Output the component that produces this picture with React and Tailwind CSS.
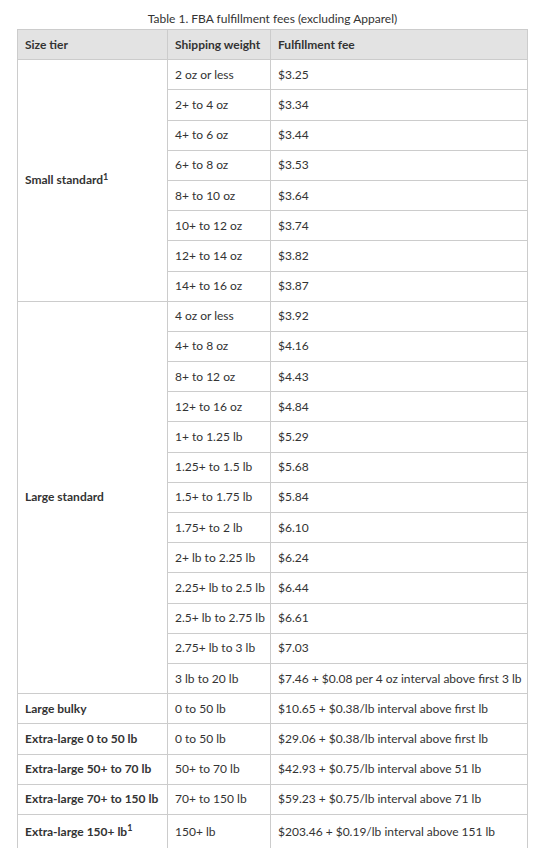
import React from 'react';

const smallStandard = [
  ['2 oz or less', '$3.25'],
  ['2+ to 4 oz', '$3.34'],
  ['4+ to 6 oz', '$3.44'],
  ['6+ to 8 oz', '$3.53'],
  ['8+ to 10 oz', '$3.64'],
  ['10+ to 12 oz', '$3.74'],
  ['12+ to 14 oz', '$3.82'],
  ['14+ to 16 oz', '$3.87'],
];

const largeStandard = [
  ['4 oz or less', '$3.92'],
  ['4+ to 8 oz', '$4.16'],
  ['8+ to 12 oz', '$4.43'],
  ['12+ to 16 oz', '$4.84'],
  ['1+ to 1.25 lb', '$5.29'],
  ['1.25+ to 1.5 lb', '$5.68'],
  ['1.5+ to 1.75 lb', '$5.84'],
  ['1.75+ to 2 lb', '$6.10'],
  ['2+ lb to 2.25 lb', '$6.24'],
  ['2.25+ lb to 2.5 lb', '$6.44'],
  ['2.5+ lb to 2.75 lb', '$6.61'],
  ['2.75+ lb to 3 lb', '$7.03'],
  ['3 lb to 20 lb', '$7.46 + $0.08 per 4 oz interval above first 3 lb'],
];

const singles = [
  ['Large bulky', '0 to 50 lb', '$10.65 + $0.38/lb interval above first lb'],
  ['Extra-large 0 to 50 lb', '0 to 50 lb', '$29.06 + $0.38/lb interval above first lb'],
  ['Extra-large 50+ to 70 lb', '50+ to 70 lb', '$42.93 + $0.75/lb interval above 51 lb'],
  ['Extra-large 70+ to 150 lb', '70+ to 150 lb', '$59.23 + $0.75/lb interval above 71 lb'],
];

const cell = 'border border-[#cccccc] px-[7px] py-[5.6px] text-left align-middle whitespace-nowrap';

const TierGroup = ({ name, rows }) => (
  <>
    {rows.map(([weight, fee], i) => (
      <tr key={weight}>
        {i === 0 && (
          <td rowSpan={rows.length} className={`${cell} font-bold`}>
            {name}
          </td>
        )}
        <td className={cell}>{weight}</td>
        <td className={cell}>{fee}</td>
      </tr>
    ))}
  </>
);

export default function App() {
  return (
    <div
      className="min-h-screen bg-white pt-[10px] pl-[17px] text-[#333333]"
      style={{ fontFamily: 'Lato, "Noto Sans", sans-serif' }}
    >
      <table className="w-[511px] table-fixed border-collapse text-[12px] leading-[18px]">
        <caption className="pb-[2px] text-center text-[12px] leading-[17px]">
          Table 1. FBA fulfillment fees (excluding Apparel)
        </caption>
        <colgroup>
          <col className="w-[150px]" />
          <col className="w-[103px]" />
          <col />
        </colgroup>
        <thead>
          <tr className="bg-[#e3e3e3]">
            <th className={`${cell} font-bold`}>Size tier</th>
            <th className={`${cell} font-bold`}>Shipping weight</th>
            <th className={`${cell} font-bold`}>Fulfillment fee</th>
          </tr>
        </thead>
        <tbody>
          <TierGroup
            name={<>Small standard<sup className="text-[9px]">1</sup></>}
            rows={smallStandard}
          />
          <TierGroup name="Large standard" rows={largeStandard} />
          {singles.map(([tier, weight, fee]) => (
            <tr key={tier}>
              <td className={`${cell} font-bold`}>{tier}</td>
              <td className={cell}>{weight}</td>
              <td className={cell}>{fee}</td>
            </tr>
          ))}
          <tr>
            <td className={`${cell} py-[8px] font-bold`}>
              Extra-large 150+ lb<sup className="text-[9px]">1</sup>
            </td>
            <td className={`${cell} py-[8px]`}>150+ lb</td>
            <td className={`${cell} py-[8px]`}>$203.46 + $0.19/lb interval above 151 lb</td>
          </tr>
        </tbody>
      </table>
    </div>
  );
}
